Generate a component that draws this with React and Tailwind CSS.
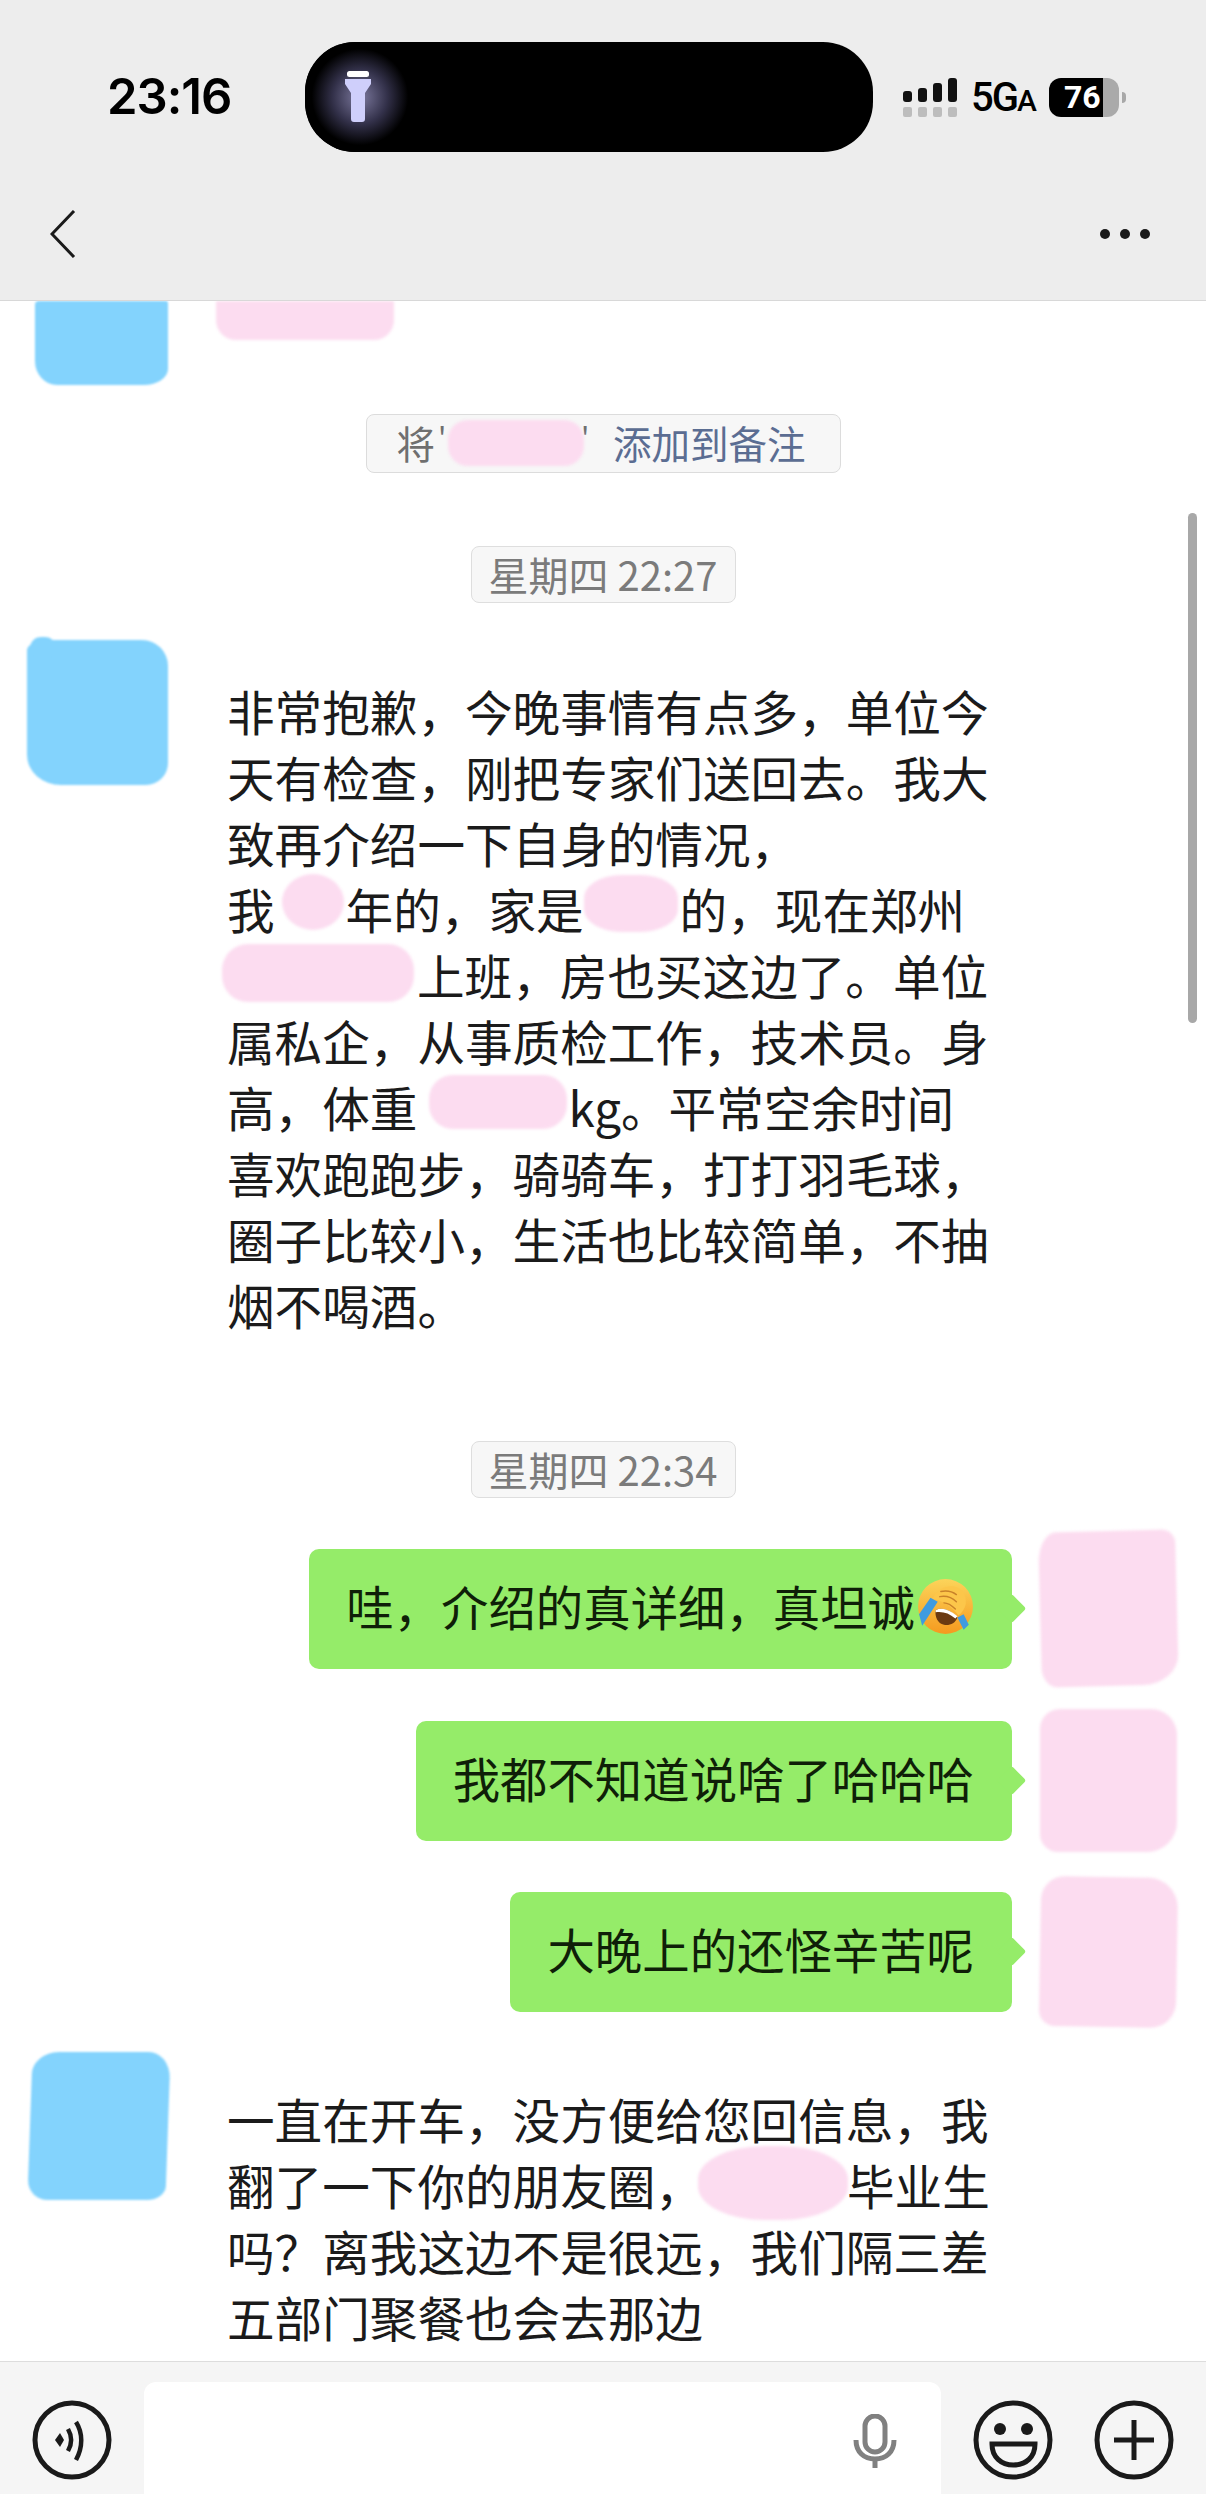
const PINK = 'bg-[#fcdcf0] blur-[1.5px]'
const BLUE = 'bg-[#83d3fd] blur-[1px]'

const LINES_1 = [
  ['非常抱歉，今晚事情有点多，单位今'],
  ['天有检查，刚把专家们送回去。我大'],
  ['致再介绍一下自身的情况，'],
  ['我', { w: 'w-[71px]', blob: 'left-[7px] -top-[2px] w-[62px] h-[56px] rounded-[50%]' }, '年的，家是', { w: 'w-[96px]', blob: 'left-0 -top-[1px] w-[94px] h-[57px] rounded-[40%]' }, '的，现在郑州'],
  [{ w: 'w-[190px]', blob: '-left-[5px] top-[2px] w-[192px] h-[58px] rounded-[26px]' }, '上班，房也买这边了。单位'],
  ['属私企，从事质检工作，技术员。身'],
  ['高，体重', { w: 'w-[151px]', blob: 'left-[12px] top-[1px] w-[138px] h-[54px] rounded-[24px]' }, 'kg。平常空余时间'],
  ['喜欢跑跑步，骑骑车，打打羽毛球，'],
  ['圈子比较小，生活也比较简单，不抽'],
  ['烟不喝酒。'],
]

const LINES_2 = [
  ['一直在开车，没方便给您回信息，我'],
  ['翻了一下你的朋友圈，', { w: 'w-[144px]', blob: '-left-[5px] -top-[6px] w-[150px] h-[74px] rounded-[45%]' }, '毕业生'],
  ['吗？离我这边不是很远，我们隔三差'],
  ['五部门聚餐也会去那边'],
]

function Gap({ w, blob }) {
  return (
    <span className={`relative inline-block h-[50px] align-top ${w}`}>
      <span className={`absolute ${PINK} ${blob}`} />
    </span>
  )
}

function TextBlock({ lines }) {
  return (
    <div className="text-[47.6px] leading-[66px] text-[#1b1b1b] whitespace-nowrap">
      {lines.map((parts, i) => (
        <div key={i} className="h-[66px]">
          {parts.map((p, j) => (typeof p === 'string' ? <span key={j}>{p}</span> : <Gap key={j} {...p} />))}
        </div>
      ))}
    </div>
  )
}

function TimeChip({ children, className }) {
  return (
    <div className={`self-center flex items-center justify-center w-[265px] h-[57px] pb-[2px] rounded-[8px] border border-[#dedede] bg-[#f7f7f7] text-[40px] text-[#7b7b7b] whitespace-nowrap ${className}`}>
      {children}
    </div>
  )
}

function LaughCry() {
  return (
    <svg viewBox="0 0 55 55" className="w-[57px] h-[57px] shrink-0 ml-[2px] mt-[1px]">
      <defs>
        <linearGradient id="face" x1="0" y1="0" x2="0" y2="1">
          <stop offset="0" stopColor="#fcd45a" />
          <stop offset="1" stopColor="#f59a1f" />
        </linearGradient>
      </defs>
      <circle cx="27.5" cy="27.5" r="26.5" fill="url(#face)" />
      <path d="M18 31c6-3 13-1 21 7-2 6-8 8-13 7-6-1-9-8-8-14z" fill="#6b3a12" />
      <path d="M18 31c6-3 13-1 21 6l-2 2c-6-5-12-7-19-6z" fill="#fff" />
      <path d="M13 19 2 35l3 11 15-23z" fill="#3f9be0" />
      <path d="M39 38l6 12 5-5-5-10z" fill="#3f9be0" />
      <path d="M15 20c4-9 12-13 20-12 8 1 13 8 12 17-1 5-4 9-7 11-6-8-14-14-25-16z" fill="#fcc64a" />
      <path d="M23 13c5-1 11 0 15 3M22 18c6-1 12 1 16 5M26 24c4 0 8 3 11 6" fill="none" stroke="#c9822a" strokeWidth="1.4" strokeLinecap="round" />
    </svg>
  )
}

function Bubble({ children, blob }) {
  return (
    <div className="flex items-center justify-end pr-[29px]">
      <div className="relative flex items-center h-[120px] pb-[6px] pl-[37px] pr-[38px] rounded-[10px] bg-[#95ec69] text-[47.4px] text-[#0f1f08] whitespace-nowrap">
        {children}
        <span className="absolute -right-[10px] top-[49px] w-[21px] h-[21px] rotate-45 rounded-[3px] bg-[#95ec69]" />
      </div>
      <div className={`ml-[28px] w-[137px] ${PINK} ${blob}`} />
    </div>
  )
}

export default function App() {
  return (
    <div className="flex flex-col w-[1206px] h-[2494px] overflow-hidden bg-white font-['Noto_Sans_CJK_SC',sans-serif]">
      <header className="h-[301px] shrink-0 bg-[#ededed] border-b border-[#d8d8d8]">
        <div className="flex pt-[42px]">
          <div className="w-[305px] pl-[107px] pt-[28px] text-[49px] leading-[54px] font-semibold tracking-[-1px] text-black font-['Inter',sans-serif]">
            23:16
          </div>
          <div className="relative w-[568px] h-[110px] rounded-[50px] bg-black overflow-hidden flex items-center pl-[39px]">
            <span className="absolute left-0 top-0 w-[110px] h-[110px] bg-[radial-gradient(circle,#7d7a9f_0%,#33314a_35%,#000_62%)]" />
            <svg viewBox="0 0 28 52" className="relative w-[28px] h-[52px]">
              <rect x="3" y="0" width="22" height="6" rx="2.5" fill="#fff" />
              <path d="M1 8h26v5l-6 9v26a3 3 0 0 1-3 3h-8a3 3 0 0 1-3-3V22l-6-9z" fill="#cfcffb" />
            </svg>
          </div>
          <div className="flex items-start pl-[30px] pt-[36px] text-black font-['Roboto',sans-serif]">
            <svg viewBox="0 0 54 39" className="w-[54px] h-[39px] mr-[14px]">
              <rect x="0" y="13" width="9" height="11" rx="3" fill="#111" />
              <rect x="15" y="10" width="9" height="14" rx="3" fill="#111" />
              <rect x="30" y="5" width="9" height="19" rx="3" fill="#111" />
              <rect x="45" y="0" width="9" height="24" rx="3" fill="#111" />
              <rect x="0" y="29" width="9" height="10" rx="2" fill="#bdbdbd" />
              <rect x="15" y="29" width="9" height="10" rx="2" fill="#bdbdbd" />
              <rect x="30" y="29" width="9" height="10" rx="2" fill="#bdbdbd" />
              <rect x="45" y="29" width="9" height="10" rx="2" fill="#bdbdbd" />
            </svg>
            <div className="flex items-baseline w-[78px] h-[39px] text-[40px] leading-[39px] font-medium tracking-[-2px]">
              5G<span className="text-[30px]">A</span>
            </div>
            <div className="relative flex w-[70px] h-[39px] rounded-[12px] overflow-hidden">
              <div className="w-[54px] bg-black text-white text-[32px] leading-[39px] font-bold pl-[15px]">76</div>
              <div className="flex-1 bg-[#aaaaaa]" />
            </div>
            <div className="w-[4px] h-[11px] mt-[14px] ml-[3px] rounded-r-full bg-[#a8a8a8]" />
          </div>
        </div>
        <div className="flex items-center justify-between pl-[50px] pr-[56px] pt-[58px]">
          <svg viewBox="0 0 26 48" className="w-[26px] h-[48px]">
            <path d="M24 1 2 24l22 23" fill="none" stroke="#1a1a1a" strokeWidth="3" />
          </svg>
          <div className="flex gap-[10px] mb-[1px]">
            <span className="w-[10px] h-[10px] rounded-full bg-[#1a1a1a]" />
            <span className="w-[10px] h-[10px] rounded-full bg-[#1a1a1a]" />
            <span className="w-[10px] h-[10px] rounded-full bg-[#1a1a1a]" />
          </div>
        </div>
      </header>

      <main className="relative flex-1 min-h-0 flex flex-col overflow-hidden">
        <span className="absolute right-[9px] top-[212px] w-[9px] h-[510px] rounded-full bg-[#a8a8a8]" />

        <div className="flex items-start pl-[35px] h-[84px]">
          <div className={`w-[133px] h-[84px] rounded-[4px_2px_24px_22px/4px_2px_16px_24px] ${BLUE}`} />
          <div className={`ml-[48px] w-[178px] h-[39px] rounded-b-[20px] ${PINK}`} />
        </div>

        <div className="self-center mt-[29px] flex items-center w-[475px] h-[59px] pb-[2px] pl-[30px] rounded-[8px] border border-[#dcdcdc] bg-[#f7f7f7] text-[38.5px] text-[#6f6f6f] whitespace-nowrap">
          将
          <span className="relative inline-block w-[178px] h-[50px]">
            <span className="absolute left-[3px] -top-[4px] text-[30px]">'</span>
            <span className="absolute left-[146px] -top-[4px] text-[30px]">'</span>
            <span className={`absolute left-[13px] top-[2px] w-[136px] h-[46px] rounded-[20px] ${PINK}`} />
          </span>
          <span className="text-[#5b6d92]">添加到备注</span>
        </div>

        <TimeChip className="mt-[73px]">星期四 22:27</TimeChip>

        <div className="flex items-start pl-[27px] mt-[37px]">
          <div className={`relative w-[141px] h-[145px] shrink-0 rounded-[24px_26px_22px_34px/10px_26px_22px_30px] ${BLUE}`}>
            <span className="absolute left-[3px] -top-[3px] w-[26px] h-[22px] rounded-full bg-[#83d3fd]" />
          </div>
          <div className="ml-[59px] mt-[38px]">
            <TextBlock lines={LINES_1} />
          </div>
        </div>

        <TimeChip className="mt-[103px]">星期四 22:34</TimeChip>

        <div className="flex flex-col gap-[51px] mt-[50px]">
          <Bubble blob="h-[155px] -my-[17px] rounded-[18px_14px_36px_16px/30px_14px_30px_20px] -rotate-[1.5deg]">
            哇，介绍的真详细，真坦诚
            <LaughCry />
          </Bubble>
          <Bubble blob="h-[143px] -my-[11px] rounded-[20px_26px_30px_18px]">我都不知道说啥了哈哈哈</Bubble>
          <Bubble blob="h-[150px] -my-[15px] rounded-[24px_30px_26px_16px] rotate-[1deg]">大晚上的还怪辛苦呢</Bubble>
        </div>

        <div className="flex items-start pl-[30px] mt-[40px]">
          <div className={`w-[138px] h-[148px] shrink-0 -skew-x-[2deg] rounded-[26px_22px_18px_20px/22px_26px_14px_20px] ${BLUE}`} />
          <div className="ml-[59px] mt-[34px]">
            <TextBlock lines={LINES_2} />
          </div>
        </div>
      </main>

      <footer className="h-[133px] shrink-0 flex items-start pl-[32px] bg-[#f5f5f5] border-t border-[#dddddd]">
        <svg viewBox="0 0 80 80" className="w-[80px] h-[80px] mt-[38px]">
          <circle cx="40" cy="40" r="37" fill="none" stroke="#1a1a1a" strokeWidth="5" />
          <path d="M28 33l-5 7 5 7 4-7z" fill="#1a1a1a" />
          <path d="M36 29c4 7 4 15 0 22M44 22c7 11 7 25 0 38" fill="none" stroke="#1a1a1a" strokeWidth="4.5" />
        </svg>
        <div className="ml-[32px] w-[797px] h-[132px] mt-[20px] flex justify-end pr-[44px] pt-[32px] rounded-[12px] bg-white">
          <svg viewBox="0 0 44 54" className="w-[44px] h-[54px]">
            <rect x="12" y="2" width="20" height="36" rx="10" fill="none" stroke="#808080" strokeWidth="5" />
            <path d="M3 26c0 12 8 19 19 19s19-7 19-19M22 45v9" fill="none" stroke="#808080" strokeWidth="5" />
          </svg>
        </div>
        <svg viewBox="0 0 80 80" className="w-[80px] h-[80px] ml-[32px] mt-[38px]">
          <circle cx="40" cy="40" r="37" fill="none" stroke="#1a1a1a" strokeWidth="5" />
          <circle cx="27" cy="29" r="6" fill="#1a1a1a" />
          <circle cx="54" cy="29" r="6" fill="#1a1a1a" />
          <path d="M19 44h43c0 13-9 21-21.500 21S19 57 19 44z" fill="none" stroke="#1a1a1a" strokeWidth="5" />
        </svg>
        <svg viewBox="0 0 80 80" className="w-[80px] h-[80px] ml-[41px] mt-[38px]">
          <circle cx="40" cy="40" r="37" fill="none" stroke="#1a1a1a" strokeWidth="5" />
          <path d="M40 20v40M20 40h40" fill="none" stroke="#1a1a1a" strokeWidth="5" />
        </svg>
      </footer>
    </div>
  )
}
